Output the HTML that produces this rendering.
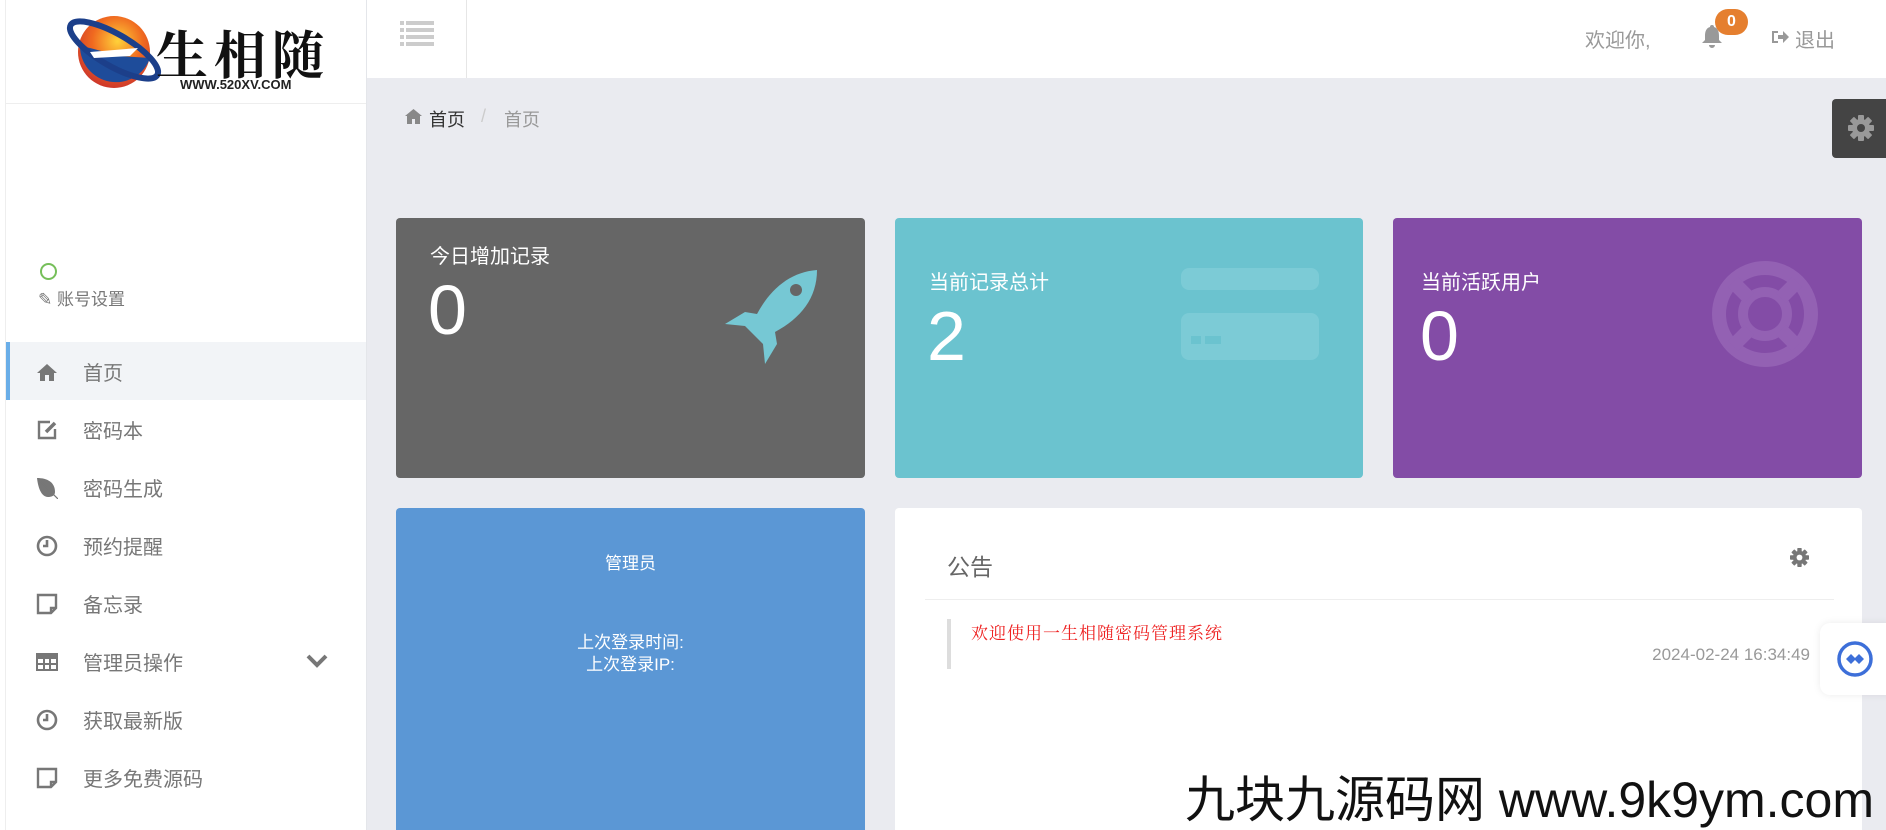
<!DOCTYPE html>
<html><head><meta charset="utf-8"><style>
*{box-sizing:border-box;margin:0;padding:0}
html,body{width:1886px;height:830px;overflow:hidden}
body{background:#eaebf0;font-family:"Liberation Sans","Noto Sans CJK SC",sans-serif;position:relative}
.abs{position:absolute}
.side{left:6px;top:0;width:361px;height:830px;background:#fff;border-right:1px solid #e4e6ea}
.menu{left:6px;width:360px;height:58px;color:#777;font-size:20px}
.menu .ic{position:absolute;left:30px;top:19px;width:22px;height:22px}
.menu .tx{position:absolute;left:77px;top:15px}
.card{border-radius:4px;color:#fff}
</style></head><body>
<div class="abs side"></div>
<div class="abs" style="left:0;top:0;width:6px;height:830px;background:#fff;border-right:1px solid #eee"></div>
<!-- logo -->
<div class="abs" style="left:6px;top:0;width:360px;height:104px;border-bottom:1px solid #eee">
 <svg class="abs" style="left:58px;top:6px" width="110" height="86" viewBox="0 0 110 86">
  <defs><radialGradient id="g" cx="0.55" cy="0.35" r="0.7"><stop offset="0" stop-color="#ffd23a"/><stop offset="0.5" stop-color="#f06a20"/><stop offset="1" stop-color="#c9302c"/></radialGradient></defs>
  <circle cx="50" cy="46" r="36" fill="url(#g)"/>
  <path d="M16 40 A36 36 0 0 0 86 52 L56 50 L26 42Z" fill="#1e4c9a"/>
  <ellipse cx="50" cy="44" rx="50" ry="16" transform="rotate(30 50 44)" fill="none" stroke="#1c3f8a" stroke-width="6"/>
  <path d="M26 46 L74 42 L66 50 L30 52Z" fill="#fff"/>
 </svg>
 <div class="abs" style="left:150px;top:14px;font:bold 52px 'Noto Serif CJK SC',serif;color:#111;letter-spacing:6px">生相随</div>
 <div class="abs" style="left:174px;top:77px;font:bold 13px 'Liberation Sans',sans-serif;color:#222">WWW.520XV.COM</div>
</div>
<!-- header -->
<div class="abs" style="left:367px;top:0;width:1519px;height:78px;background:#fff"></div>
<div class="abs" style="left:466px;top:0;width:1px;height:78px;background:#e6e6e6"></div>
<svg class="abs" style="left:400px;top:20px" width="34" height="28" viewBox="0 0 34 28" fill="#ccc">
 <rect x="0" y="1" width="4" height="4"/><rect x="6" y="1" width="28" height="4"/>
 <rect x="0" y="8" width="4" height="4"/><rect x="6" y="8" width="28" height="4"/>
 <rect x="0" y="15" width="4" height="4"/><rect x="6" y="15" width="28" height="4"/>
 <rect x="0" y="22" width="4" height="4"/><rect x="6" y="22" width="28" height="4"/>
</svg>
<div class="abs" style="left:1585px;top:24px;font-size:20px;color:#999">欢迎你,</div>
<svg class="abs" style="left:1701px;top:24px" width="22" height="24" viewBox="0 0 22 24" fill="#999"><path d="M11 1a2 2 0 0 1 2 2c4 1 5 5 5 9v4l3 3H1l3-3v-4c0-4 1-8 5-9a2 2 0 0 1 2-2zM8 21h6a3 3 0 0 1-6 0z"/></svg>
<div class="abs" style="left:1715px;top:9px;width:33px;height:26px;border-radius:13px;background:#e57f2f;color:#fff;font:bold 16px 'Liberation Sans';text-align:center;line-height:26px">0</div>
<svg class="abs" style="left:1771px;top:29px" width="18" height="16" viewBox="0 0 18 16" fill="#999"><path d="M1 2h6v2H3v8h4v2H1z"/><path d="M7 6h5V2l6 6-6 6v-4H7z"/></svg>
<div class="abs" style="left:1795px;top:24px;font-size:20px;color:#999">退出</div>
<!-- breadcrumb -->
<svg class="abs" style="left:405px;top:109px" width="17" height="15" viewBox="0 0 17 15" fill="#888"><path d="M8.5 0L0 7h2v8h5v-5h3v5h5V7h2z"/></svg>
<div class="abs" style="left:429px;top:106px;font-size:18px;color:#333">首页</div>
<div class="abs" style="left:481px;top:106px;font-size:18px;color:#ccc">/</div>
<div class="abs" style="left:504px;top:106px;font-size:18px;color:#999">首页</div>
<div class="abs" style="left:1832px;top:99px;width:54px;height:59px;background:#444;border-radius:4px 0 0 4px"></div>
<svg class="abs" style="left:1848px;top:115px" width="26" height="26" viewBox="0 0 26 26"><g fill="#999"><circle cx="13" cy="13" r="9"/><rect x="10" y="0" width="6" height="26" rx="1"/><rect x="0" y="10" width="26" height="6" rx="1"/><rect x="10" y="0" width="6" height="26" rx="1" transform="rotate(45 13 13)"/><rect x="10" y="0" width="6" height="26" rx="1" transform="rotate(-45 13 13)"/></g><circle cx="13" cy="13" r="4" fill="#444"/></svg>
<!-- sidebar user -->
<div class="abs" style="left:40px;top:263px;width:17px;height:17px;border:2.5px solid #76bf5a;border-radius:50%"></div>
<div class="abs" style="left:38px;top:285px;font-size:17px;color:#777">✎ 账号设置</div>
<!-- menu -->
<div class="abs menu" style="top:342px;background:#f2f4f7;border-left:4px solid #6aaee8"><svg class="ic" viewBox="0 0 22 22" fill="#777" style="left:26px"><path d="M11 3L1 12h3v8h5v-6h4v6h5v-8h3z"/></svg><span class="tx" style="left:73px">首页</span></div>
<div class="abs menu" style="top:400px"><svg class="ic" viewBox="0 0 22 22" fill="none" stroke="#777" stroke-width="2.4"><path d="M14 3H3v16h16V10"/><path d="M10 13l9-9" stroke-width="3.5"/></svg><span class="tx">密码本</span></div>
<div class="abs menu" style="top:458px"><svg class="ic" viewBox="0 0 22 22" fill="#777"><path d="M1 1c10 0 18 4 18 14 0 4-4 5-7 5C5 20 2 10 1 1z"/><path d="M3 3l19 19" stroke="#777" stroke-width="1.2"/></svg><span class="tx">密码生成</span></div>
<div class="abs menu" style="top:516px"><svg class="ic" viewBox="0 0 22 22" fill="none" stroke="#777" stroke-width="2.6"><circle cx="11" cy="11" r="9"/><path d="M11 5v6h-4"/></svg><span class="tx">预约提醒</span></div>
<div class="abs menu" style="top:574px"><svg class="ic" viewBox="0 0 22 22" fill="none" stroke="#777" stroke-width="2.4"><path d="M2 2h18v13l-5 5H2z"/><path d="M15 20v-5h5"/></svg><span class="tx">备忘录</span></div>
<div class="abs menu" style="top:632px"><svg class="ic" viewBox="0 0 22 22" fill="#777"><path d="M0 2h22v18H0z M2 8v4h5V8z M9 8v4h4V8z M15 8v4h5V8z M2 14v4h5v-4z M9 14v4h4v-4z M15 14v4h5v-4z" fill-rule="evenodd"/></svg><span class="tx">管理员操作</span>
 <svg class="abs" style="left:300px;top:21px" width="22" height="16" viewBox="0 0 22 16"><path d="M2 3l9 9 9-9" fill="none" stroke="#777" stroke-width="4"/></svg></div>
<div class="abs menu" style="top:690px"><svg class="ic" viewBox="0 0 22 22" fill="none" stroke="#777" stroke-width="2.6"><circle cx="11" cy="11" r="9"/><path d="M11 5v6h-4"/></svg><span class="tx">获取最新版</span></div>
<div class="abs menu" style="top:748px"><svg class="ic" viewBox="0 0 22 22" fill="none" stroke="#777" stroke-width="2.4"><path d="M2 2h18v13l-5 5H2z"/><path d="M15 20v-5h5"/></svg><span class="tx">更多免费源码</span></div>
<!-- cards -->
<div class="abs card" style="left:396px;top:218px;width:469px;height:260px;background:#666">
 <div class="abs" style="left:34px;top:22px;font-size:20px">今日增加记录</div>
 <div class="abs" style="left:32px;top:52px;font-size:70px;line-height:80px">0</div>
 <svg class="abs" style="left:325px;top:50px" width="100" height="100" viewBox="0 0 100 100" fill="#76c8d4"><path d="M96 2C70 4 50 20 36 46L24 44 4 56l20 2 18 18 2 20 12-20-2-12C80 50 96 30 96 2z"/><circle cx="75" cy="22" r="6" fill="#666"/></svg>
</div>
<div class="abs card" style="left:895px;top:218px;width:468px;height:260px;background:#6bc3cf">
 <div class="abs" style="left:34px;top:48px;font-size:20px">当前记录总计</div>
 <div class="abs" style="left:32px;top:78px;font-size:70px;line-height:80px">2</div>
 <svg class="abs" style="left:286px;top:50px" width="138" height="92" viewBox="0 0 138 92" fill="#7ccbd6"><rect x="0" y="0" width="138" height="22" rx="8"/><rect x="0" y="45" width="138" height="47" rx="8"/><rect x="10" y="68" width="10" height="8" fill="#6bc3cf"/><rect x="24" y="68" width="16" height="8" fill="#6bc3cf"/></svg>
</div>
<div class="abs card" style="left:1393px;top:218px;width:469px;height:260px;background:#834ca6">
 <div class="abs" style="left:28px;top:48px;font-size:20px">当前活跃用户</div>
 <div class="abs" style="left:27px;top:78px;font-size:70px;line-height:80px">0</div>
 <svg class="abs" style="left:318px;top:42px" width="108" height="108" viewBox="0 0 108 108"><circle cx="54" cy="54" r="46" fill="none" stroke="#9361b3" stroke-width="14"/><circle cx="54" cy="54" r="22" fill="none" stroke="#9361b3" stroke-width="10"/><g stroke="#9361b3" stroke-width="14"><path d="M22 22l16 16M86 22L70 38M22 86l16-16M86 86L70 70"/></g></svg>
</div>
<div class="abs card" style="left:396px;top:508px;width:469px;height:330px;background:#5b97d5;text-align:center;font-size:17px">
 <div style="margin-top:41px">管理员</div>
 <div style="margin-top:58px;line-height:22px">上次登录时间:<br>上次登录IP:</div>
</div>
<div class="abs" style="left:895px;top:508px;width:967px;height:330px;background:#fff;border-radius:4px">
 <div class="abs" style="left:52px;top:40px;font-size:23px;color:#666">公告</div>
 <svg class="abs" style="left:895px;top:40px" width="19" height="19" viewBox="0 0 26 26"><g fill="#777"><circle cx="13" cy="13" r="9"/><rect x="10" y="0" width="6" height="26" rx="1"/><rect x="0" y="10" width="26" height="6" rx="1"/><rect x="10" y="0" width="6" height="26" rx="1" transform="rotate(45 13 13)"/><rect x="10" y="0" width="6" height="26" rx="1" transform="rotate(-45 13 13)"/></g><circle cx="13" cy="13" r="4" fill="#fff"/></svg>
 <div class="abs" style="left:30px;top:91px;width:909px;height:1px;background:#eee"></div>
 <div class="abs" style="left:52px;top:111px;width:4px;height:50px;background:#ddd"></div>
 <div class="abs" style="left:76px;top:111px;font:17px 'Noto Serif CJK SC',serif;color:#e22;letter-spacing:1px">欢迎使用一生相随密码管理系统</div>
 <div class="abs" style="right:52px;top:137px;font-size:17px;color:#999">2024-02-24 16:34:49</div>
</div>
<div class="abs" style="left:1820px;top:623px;width:70px;height:72px;background:#fff;border-radius:10px 0 0 10px;box-shadow:0 0 8px rgba(0,0,0,.08)"></div>
<svg class="abs" style="left:1837px;top:641px" width="36" height="36" viewBox="0 0 36 36"><circle cx="18" cy="18" r="16" fill="none" stroke="#3d6fd9" stroke-width="3.5"/><path d="M9 18l5-5 4 4 4-4 5 5-5 5-4-4-4 4z" fill="#3d6fd9"/></svg>
<div class="abs" style="left:1185px;top:760px;font-size:50px;color:#111;white-space:nowrap">九块九源码网 www.9k9ym.com</div>
</body></html>
